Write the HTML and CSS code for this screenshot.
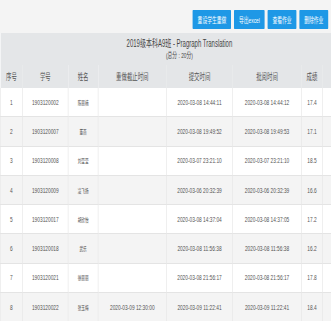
FILE: index.html
```html
<!DOCTYPE html>
<html lang="zh">

<head>
  <meta charset="UTF-8">
  <meta name="viewport" content="width=device-width, initial-scale=1.0">
  <title>作业详情</title>
  <link rel="stylesheet" href="styles.css">
</head>

<body>

  <div class="page">
    <div class="toolbar">
      <button class="btn">重设学生重做</button>
      <button class="btn">导出excel</button>
      <button class="btn">查看作业</button>
      <button class="btn">删除作业</button>
    </div>

    <table class="grid">
      <colgroup>
        <col style="width: 37px">
        <col style="width: 76px">
        <col style="width: 50px">
        <col style="width: 114px">
        <col style="width: 110px">
        <col style="width: 115px">
        <col style="width: 35px">
        <col style="width: 60px">
      </colgroup>
      <thead>
        <tr class="title-row">
          <th colspan="8">
            <div class="title">2019级本科A9班 - Pragraph Translation</div>
            <div class="total">(总分 : 20分)</div>
          </th>
        </tr>
        <tr class="head-row">
          <th>序号</th>
          <th>学号</th>
          <th>姓名</th>
          <th>重做截止时间</th>
          <th>提交时间</th>
          <th>批阅时间</th>
          <th>成绩</th>
          <th>更多</th>
        </tr>
      </thead>
      <tbody>
        <tr>
          <td>1</td><td>1903120002</td><td class="name">陈丽楠</td><td></td>
          <td>2020-03-08 14:44:11</td><td>2020-03-08 14:44:12</td><td>17.4</td><td></td>
        </tr>
        <tr>
          <td>2</td><td>1903120007</td><td class="name">董燕</td><td></td>
          <td>2020-03-08 19:49:52</td><td>2020-03-08 19:49:53</td><td>17.1</td><td></td>
        </tr>
        <tr>
          <td>3</td><td>1903120008</td><td class="name">刘莹莹</td><td></td>
          <td>2020-03-07 23:21:10</td><td>2020-03-07 23:21:10</td><td>18.5</td><td></td>
        </tr>
        <tr>
          <td>4</td><td>1903120009</td><td class="name">凌飞扬</td><td></td>
          <td>2020-03-06 20:32:39</td><td>2020-03-06 20:32:39</td><td>16.6</td><td></td>
        </tr>
        <tr>
          <td>5</td><td>1903120017</td><td class="name">胡欣怡</td><td></td>
          <td>2020-03-08 14:37:04</td><td>2020-03-08 14:37:05</td><td>17.2</td><td></td>
        </tr>
        <tr>
          <td>6</td><td>1903120018</td><td class="name">武乐</td><td></td>
          <td>2020-03-08 11:56:38</td><td>2020-03-08 11:56:38</td><td>16.2</td><td></td>
        </tr>
        <tr>
          <td>7</td><td>1903120021</td><td class="name">徐丽丽</td><td></td>
          <td>2020-03-08 21:56:17</td><td>2020-03-08 21:56:17</td><td>17.8</td><td></td>
        </tr>
        <tr>
          <td>8</td><td>1903120022</td><td class="name">张玉梅</td><td>2020-03-09 12:30:00</td>
          <td>2020-03-09 11:22:41</td><td>2020-03-09 11:22:41</td><td>18.4</td><td></td>
        </tr>
      </tbody>
    </table>
  </div>

</body>

</html>
```

FILE: styles.css
```css
body {
  margin: 0;
  overflow: hidden;
  background-color: #f4f4f4;
  font-family: "Liberation Sans", "Noto Sans CJK SC", sans-serif;
  color: #555;
}

/* the screenshot is squeezed sideways, so lay out wide and scale */
.page {
  width: 552px;
  overflow: hidden;
  transform: scaleX(0.6);
  transform-origin: 0 0;
}

.toolbar {
  display: flex;
  justify-content: flex-end;
  gap: 5px;
  padding: 10px 5px 4px 0;
}

.btn {
  height: 19px;
  padding: 0 8px;
  border: 0;
  border-radius: 1px;
  background-color: #1e98e6;
  color: #fff;
  font-family: inherit;
  font-size: 8px;
}

.grid {
  width: 597px;
  table-layout: fixed;
  border-collapse: collapse;
  background-color: #fff;
}

.grid th {
  background-color: #e4e6e8;
  font-weight: normal;
  text-align: center;
}

.title-row th {
  height: 24px;
  padding: 5px 0 3px;
  vertical-align: top;
  color: #444;
}

.title {
  font-size: 10px;
  line-height: 12px;
}

.total {
  font-size: 8px;
  line-height: 12px;
}

.head-row th {
  height: 23px;
  padding: 0;
  font-size: 9px;
}

.grid td {
  height: 28.3px;
  padding: 0;
  border: 1px solid #e4e4e4;
  border-top: 0;
  text-align: center;
  font-size: 8px;
  color: #555;
  white-space: nowrap;
}

.grid tbody tr:nth-child(even) td {
  background-color: #f4f4f4;
}

.grid td.name {
  font-size: 6px;
}
```
